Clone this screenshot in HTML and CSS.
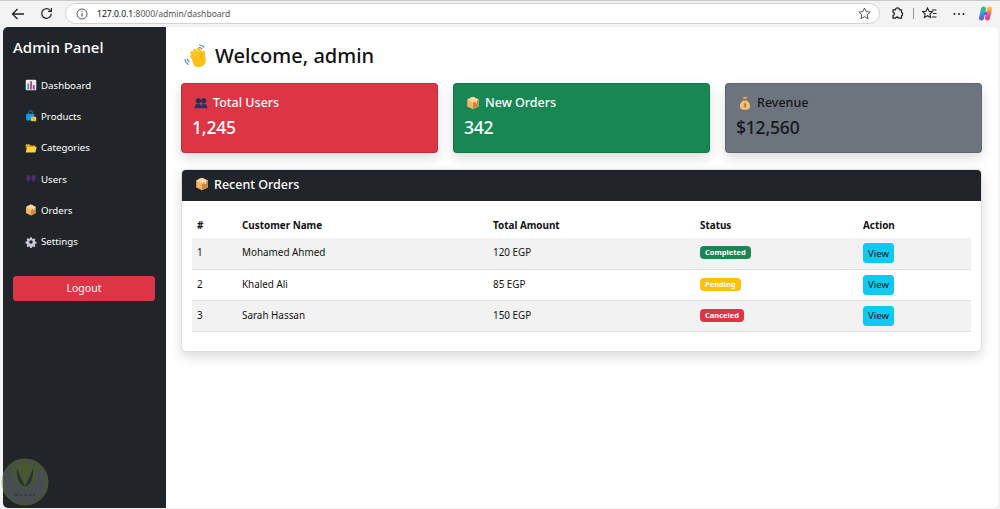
FILE: index.html
```html
<!DOCTYPE html>
<html lang="en">
<head>
<meta charset="utf-8">
<title>Admin Dashboard</title>
<link rel="stylesheet" href="styles.css">
</head>
<body>
<svg class="defs" width="0" height="0" aria-hidden="true">
  <defs>
    <linearGradient id="g-left" x1="0" y1="0" x2="0" y2="1"><stop offset="0" stop-color="#35c27a"/><stop offset=".5" stop-color="#2a9fe8"/><stop offset="1" stop-color="#6a5ae0"/></linearGradient>
    <linearGradient id="g-right" x1="0" y1="0" x2="0" y2="1"><stop offset="0" stop-color="#f6c03d"/><stop offset=".5" stop-color="#ee5f8a"/><stop offset="1" stop-color="#d8459a"/></linearGradient>
  </defs>
  <symbol id="i-box" viewBox="0 0 16 16">
    <path d="M8 .8 14.6 4v8L8 15.2 1.400 12V4z" fill="#f4b566"/>
    <path d="M8 8v7.200L14.600 12V4z" fill="#c98a45"/>
    <path d="M1.400 4 8 .8 14.600 4 8 7.400z" fill="#fbd39a"/>
    <path d="M4.300 2.400 11 5.700v2.600l1.500-.7V5L5.700 1.700z" fill="#e8e0d0"/>
  </symbol>
  <symbol id="i-users" viewBox="0 0 16 16">
    <circle cx="5" cy="5.500" r="3" fill="#2c2a5a"/><circle cx="11" cy="5.500" r="3" fill="#2c2a5a"/>
    <path d="M.5 14c0-3.500 1.800-5.200 4.500-5.200S8 10 8 14zM8 14c0-3.500 .5-5.200 3-5.200s4.500 1.700 4.500 5.200z" fill="#33305f"/>
  </symbol>
  <symbol id="i-bag" viewBox="0 0 16 16">
    <path d="M5.500 .6c.8.600 1.700.6 2.500 0 .8.600 1.700.6 2.500 0L9.700 4H6.300z" fill="#d89a52"/>
    <path d="M6.300 4h3.400v1H6.300z" fill="#8a5a2c"/>
    <path d="M6.200 5h3.600c3.200 1.700 4.700 5.400 3.700 8.300-.5 1.700-2.600 2.300-5.500 2.300s-5-.6-5.500-2.300C1.500 10.400 3 6.700 6.200 5z" fill="#f6bf72"/>
    <path d="M8 7.500v6M6.800 9.200h2.400v1.500H6.800v1.500h2.400" fill="none" stroke="#a8703a" stroke-width=".8"/>
  </symbol>
  <symbol id="i-chart" viewBox="0 0 16 16">
    <rect x="1" y="1" width="14" height="14" rx="1.500" fill="#f2eef0"/>
    <rect x="3" y="6" width="2.600" height="8" fill="#1fb8a6"/>
    <rect x="6.700" y="3" width="2.600" height="11" fill="#e8348a"/>
    <rect x="10.400" y="8" width="2.600" height="6" fill="#7a4bd0"/>
  </symbol>
  <symbol id="i-shop" viewBox="0 0 16 16">
    <path d="M5 5V3.500a2.500 2.500 0 0 1 5 0V5" fill="none" stroke="#1c8ad6" stroke-width="1.200"/>
    <rect x="1.500" y="5" width="11" height="9" rx="1" fill="#0a9bea"/>
    <rect x="8" y="9" width="7" height="6" rx="1" fill="#f6bd3f"/>
  </symbol>
  <symbol id="i-folder" viewBox="0 0 16 16">
    <path d="M1 3h5l1.500 1.800H14v3H1z" fill="#e0a32a"/>
    <path d="M2.500 6.500H15.500L13.800 14H1z" fill="#fdd13f"/>
  </symbol>
  <symbol id="i-busts" viewBox="0 0 16 16">
    <path d="M1.500 5.500C1.500 3.800 3 3 4.500 3S7.500 3.800 7.500 5.500c0 2.500-1.500 6-3 6s-3-3.500-3-6zM8.500 5.500c0-1.700 1.500-2.500 3-2.500s3 .8 3 2.500c0 2.500-1.500 6-3 6s-3-3.500-3-6z" fill="#4d2d6b"/>
  </symbol>
  <symbol id="i-gear" viewBox="0 0 16 16">
    <path d="M6.700 1h2.600l.4 2 1.300.6 1.800-1.100 1.800 1.800-1.100 1.800.6 1.300 2 .4v2.600l-2 .4-.6 1.300 1.100 1.800-1.800 1.800-1.800-1.100-1.300.6-.4 2H6.700l-.4-2-1.300-.6-1.800 1.100-1.800-1.800 1.100-1.800-.6-1.300-2-.4V7.400l2-.4.6-1.300-1.100-1.800 1.800-1.800 1.800 1.100L6.300 3z" fill="#c9c5d2" transform="translate(.8 .8) scale(.9)"/>
    <circle cx="8" cy="8" r="2.300" fill="#212529"/>
  </symbol>
  <symbol id="i-wave" viewBox="0 0 24 24">
    <path d="M1 15.500c.3 2 1.300 3.600 3 4.800M3.500 15c.2 1.100.7 2 1.500 2.700M15.500 1c1.700.1 3.200.8 4.300 2M15.500 3.500c.9.100 1.600.4 2.200 1" fill="none" stroke="#3e86d8" stroke-width="1.200" stroke-linecap="round"/>
    <g fill="none" stroke="#fcc21b" stroke-width="3.200" stroke-linecap="round">
      <path d="M7.600 12.400 11 16"/>
      <path d="M7.800 8.800 12 13.800"/>
      <path d="M10.600 6.400 15 12"/>
      <path d="M14.400 5 18 10.500"/>
    </g>
    <path d="M6.800 12.500 15.500 7.800l2.200 1.700c.5-2.100 1.300-3 2.300-2.800 1 .2 1.200 1.300 1.100 2.700-.2 2.300.3 3.800.6 5.400.6 3.400-1 6.500-4 7.800-3.300 1.400-6.200.4-8-1.600z" fill="#fcc21b"/>
    <path d="M17.700 9.500c-1 1.300-1.200 3-.4 4.700" fill="none" stroke="#e09b10" stroke-width=".8"/>
  </symbol>
</svg>

<header class="toolbar">
  <svg class="tool back" width="14" height="14" viewBox="0 0 14 14"><path d="M13 7H1.500M6.500 2 1.500 7l5 5" fill="none" stroke="#222" stroke-width="1.300"/></svg>
  <svg class="tool reload" width="13" height="13" viewBox="0 0 13 13"><path d="M11.300 6.500a4.800 4.800 0 1 1-1.400-3.400L11.400 4.500M11.400 1v3.500H8" fill="none" stroke="#222" stroke-width="1.200"/></svg>
  <div class="address">
    <svg class="info" width="12" height="12" viewBox="0 0 12 12"><circle cx="6" cy="6" r="5" fill="none" stroke="#444" stroke-width=".9"/><path d="M6 5v3.500M6 3v1" stroke="#444" stroke-width="1"/></svg>
    <span class="url"><b class="host">127.0.0.1</b>:8000/admin/dashboard</span>
    <svg class="star" width="13" height="13" viewBox="0 0 13 13"><path d="m6.500 1 1.700 3.600 3.900.5-2.900 2.700.8 3.900-3.500-2-3.500 2 .8-3.900L.9 5.100l3.900-.5z" fill="none" stroke="#444" stroke-width=".9"/></svg>
  </div>
  <div class="tools">
    <svg width="13" height="13" viewBox="0 0 13 13"><path d="M4.500 2.800a2 2 0 0 1 4 0h2v2.400a2 2 0 0 1 0 3.600v2.400H7.800a1.800 1.800 0 0 0-3.400 0H2V8.600a1.800 1.800 0 0 0 0-3.500V2.800z" fill="none" stroke="#222" stroke-width="1.300" stroke-linejoin="round"/></svg>
    <span class="divider"></span>
    <svg width="15" height="13" viewBox="0 0 15 13"><path d="m5.500 1 1.500 3.200 3.400.4-2.500 2.400.7 3.400-3.100-1.700-3.100 1.700.7-3.400L.6 4.600 4 4.200zM10 3h4.500M11 6.500h3.500M10 10h4.500" fill="none" stroke="#222" stroke-width="1.100"/></svg>
    <svg class="dots" width="12" height="4" viewBox="0 0 12 4"><circle cx="1.500" cy="2" r="1" fill="#222"/><circle cx="6" cy="2" r="1" fill="#222"/><circle cx="10.500" cy="2" r="1" fill="#222"/></svg>
    <svg width="15" height="15" viewBox="0 0 15 15"><path d="M5.500 3 3.500 12" fill="none" stroke="url(#g-left)" stroke-width="5" stroke-linecap="round"/><path d="M11.500 3 9.500 12" fill="none" stroke="url(#g-right)" stroke-width="5" stroke-linecap="round"/><path d="M6.800 6h2.600l-1 3H5.800z" fill="#7a52d8"/></svg>
  </div>
</header>

<div class="window">
  <aside class="sidebar">
    <h1 class="brand">Admin Panel</h1>
    <nav class="nav">
      <a class="nav-item"><svg class="nav-icon"><use href="#i-chart"/></svg>Dashboard</a>
      <a class="nav-item"><svg class="nav-icon"><use href="#i-shop"/></svg>Products</a>
      <a class="nav-item"><svg class="nav-icon"><use href="#i-folder"/></svg>Categories</a>
      <a class="nav-item"><svg class="nav-icon"><use href="#i-busts"/></svg>Users</a>
      <a class="nav-item"><svg class="nav-icon"><use href="#i-box"/></svg>Orders</a>
      <a class="nav-item"><svg class="nav-icon"><use href="#i-gear"/></svg>Settings</a>
    </nav>
    <button class="logout">Logout</button>
  </aside>

  <main class="main">
    <h2 class="welcome"><svg class="wave"><use href="#i-wave"/></svg>Welcome, admin</h2>
    <section class="stats">
      <div class="stat stat-red">
        <div class="stat-title"><svg class="stat-icon"><use href="#i-users"/></svg>Total Users</div>
        <div class="stat-value">1,245</div>
      </div>
      <div class="stat stat-green">
        <div class="stat-title"><svg class="stat-icon"><use href="#i-box"/></svg>New Orders</div>
        <div class="stat-value">342</div>
      </div>
      <div class="stat stat-gray">
        <div class="stat-title"><svg class="stat-icon"><use href="#i-bag"/></svg>Revenue</div>
        <div class="stat-value">$12,560</div>
      </div>
    </section>

    <section class="orders">
      <div class="orders-head"><svg class="stat-icon"><use href="#i-box"/></svg>Recent Orders</div>
      <div class="orders-body">
        <table class="table">
          <colgroup>
            <col class="c1"><col class="c2"><col class="c3"><col class="c4"><col class="c5">
          </colgroup>
          <thead>
            <tr><th>#</th><th>Customer Name</th><th>Total Amount</th><th>Status</th><th>Action</th></tr>
          </thead>
          <tbody>
            <tr class="odd"><td>1</td><td>Mohamed Ahmed</td><td>120 EGP</td><td><span class="badge b-green">Completed</span></td><td><button class="view">View</button></td></tr>
            <tr><td>2</td><td>Khaled Ali</td><td>85 EGP</td><td><span class="badge b-yellow">Pending</span></td><td><button class="view">View</button></td></tr>
            <tr class="odd"><td>3</td><td>Sarah Hassan</td><td>150 EGP</td><td><span class="badge b-red">Canceled</span></td><td><button class="view">View</button></td></tr>
          </tbody>
        </table>
      </div>
    </section>
  </main>
</div>

<svg class="watermark" width="54" height="54" viewBox="0 0 54 54" aria-hidden="true">
  <circle cx="25" cy="27" r="22.500" fill="#70767a" stroke="#6d8a3c" stroke-width="2"/>
  <path d="M12 10c5 1 9-.5 13-3 4 2.500 8 4 13 3 .5 10-2 18-13 24C14 28 11.500 20 12 10z" fill="#6d8a3c"/>
  <path d="M17 13c2 7 5 11 8 19-6-3-9-9-8-19zM33 13c-2 7-5 11-8 19 6-3 9-9 8-19z" fill="#2a3f4c"/>
  <path d="M15 40h20" stroke="#4a4f50" stroke-width="1.500" stroke-dasharray="3 1.500"/>
</svg>
</body>
</html>
```
FILE: styles.css
```css
* { box-sizing: border-box; }
html, body { margin: 0; height: 509px; overflow: hidden; }
body {
  position: relative;
  display: flex;
  flex-direction: column;
  background: #f3f3f3;
  border-top: 1px solid #c9c9c9;
  font-family: "Noto Sans", "Open Sans", sans-serif;
  color: #111;
}
.defs { position: absolute; }

.toolbar {
  display: flex;
  align-items: center;
  flex: 0 0 26px;
  padding: 0 6px 1px 11px;
}
.tool { flex: none; }
.back { margin-right: 15px; }
.reload { margin-right: 12px; }
.address {
  flex: 0 0 815px;
  height: 21px;
  display: flex;
  align-items: center;
  padding: 0 8px 0 10px;
  background: #fff;
  border: 1px solid #d3d3d3;
  border-radius: 11px;
  font-size: 8.550px;
  color: #555;
}
.info { margin-right: 9px; }
.url { flex: 1; }
.host { font-weight: 400; color: #111; }
.tools { display: flex; align-items: center; margin-left: 11px; }
.tools svg { flex: none; }
.divider { width: 1px; height: 11px; background: #999; margin: 0 8px 0 9px; }
.dots { margin: 0 13px 0 16px; }

.window {
  flex: 1;
  display: flex;
  margin: 0 2px 1px 3px;
  background: #fff;
  border-radius: 5px;
  overflow: hidden;
  min-height: 0;
}
.sidebar {
  flex: 0 0 163px;
  display: flex;
  flex-direction: column;
  padding: 10px 10px 0;
  background: #212529;
  color: #fff;
}
.brand { margin: 0 0 11.500px; font-size: 15px; line-height: 21px; font-weight: 500; }
.nav { display: flex; flex-direction: column; }
.nav-item {
  display: flex;
  align-items: center;
  height: 31.300px;
  padding-left: 12px;
  font-size: 9.700px;
  color: #fff;
}
.nav-icon { width: 12px; height: 12px; margin-right: 4px; flex: none; }
.logout {
  margin-top: 18.500px;
  height: 25px;
  width: 142px;
  background: #dc3545;
  color: #fff;
  border: 1px solid #dc3545;
  border-radius: 3px;
  font: inherit;
  font-size: 10.500px;
}

.main { flex: 1; padding: 15px 16px 0 15px; min-width: 0; }
.welcome {
  display: flex;
  align-items: center;
  margin: 0 0 13px;
  padding-left: 3px;
  font-size: 20px;
  line-height: 28px;
  font-weight: 500;
}
.wave { width: 24px; height: 24px; margin-right: 7px; flex: none; }
.stats { display: grid; grid-template-columns: repeat(3, 1fr); gap: 15px; margin-bottom: 16px; }
.stat {
  height: 70px;
  padding: 10px;
  border-radius: 4px;
  border: 1px solid rgba(0, 0, 0, .13);
  box-shadow: 0 5px 12px rgba(0, 0, 0, .14);
  color: #fff;
}
.stat-red { background: #dc3545; }
.stat-green { background: #198754; }
.stat-gray { background: #6c757d; color: #15181b; }
.stat-title {
  display: flex;
  align-items: center;
  padding-left: 2px;
  font-size: 12.500px;
  line-height: 18px;
  font-weight: 500;
}
.stat-icon { width: 14px; height: 14px; margin-right: 5px; flex: none; }
.stat-value { margin-top: 3px; font-size: 17.500px; line-height: 25px; font-weight: 500; letter-spacing: -.2px; }

.orders {
  height: 183px;
  background: #fff;
  border: 1px solid rgba(0, 0, 0, .13);
  border-radius: 5px;
  box-shadow: 0 5px 12px rgba(0, 0, 0, .14);
  overflow: hidden;
}
.orders-head {
  display: flex;
  align-items: center;
  height: 31px;
  padding: 0 0 3px 13px;
  background: #212529;
  color: #fff;
  font-size: 12.500px;
  font-weight: 500;
}
.orders-body { padding: 11px 10px 0; }
.table { width: 779px; table-layout: fixed; border-collapse: collapse; font-size: 9.900px; }
.c1 { width: 45px; } .c2 { width: 251px; } .c3 { width: 207px; } .c4 { width: 163px; } .c5 { width: 113px; }
.table th { height: 26px; padding: 0 5px; text-align: left; font-weight: 700; }
.table td { height: 31px; padding: 0 5px 2px; border-bottom: 1px solid #dee2e6; vertical-align: middle; }
.odd td { background: #f2f2f2; }
.badge {
  display: inline-block;
  padding: 0 5px;
  height: 13px;
  line-height: 13px;
  font-size: 7.500px;
  font-weight: 700;
  color: #fff;
  border-radius: 4px;
  vertical-align: 1px;
}
.b-green { background: #198754; }
.b-yellow { background: #ffc107; }
.b-red { background: #dc3545; }
.view {
  display: block;
  width: 31px;
  height: 20px;
  padding: 0;
  background: #0dcaf0;
  border: 1px solid #0dcaf0;
  border-radius: 3px;
  color: #111;
  font: inherit;
  font-size: 9.500px;
  margin-top: 2px;
}
.watermark { position: absolute; left: 0; bottom: 0; opacity: .5; }
```
